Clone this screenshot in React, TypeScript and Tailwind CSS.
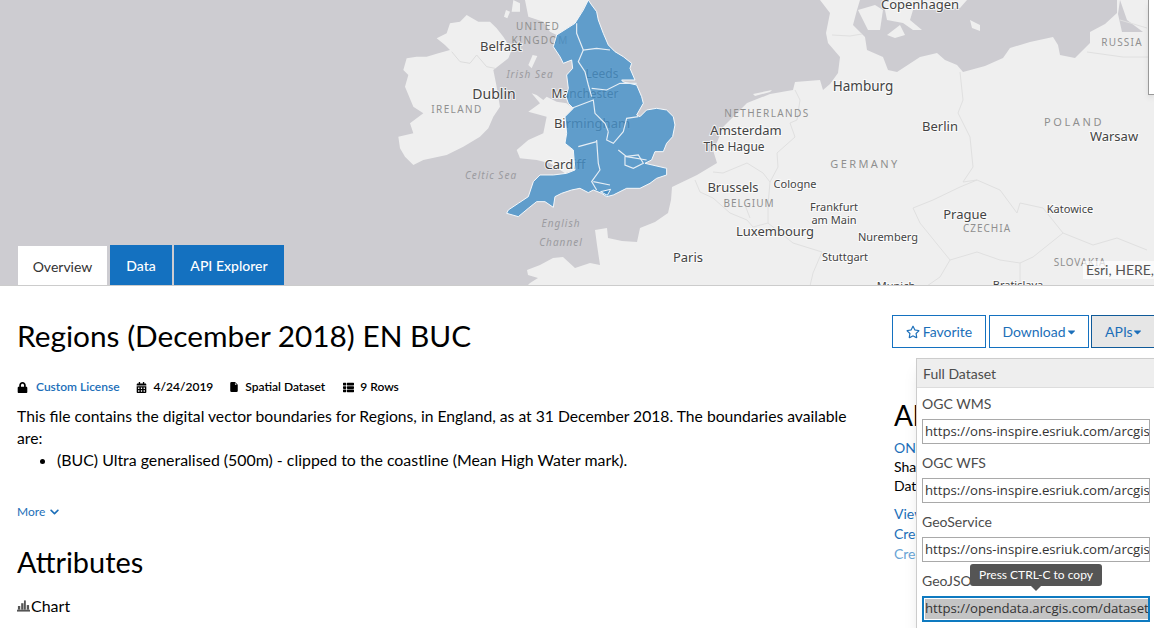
import React from 'react';
import { FaLock, FaCalendarAlt, FaThList, FaRegStar, FaChevronDown, FaCaretDown } from 'react-icons/fa';
import { BsFileEarmarkFill } from 'react-icons/bs';

const cities = [
  { t: 'Copenhagen', x: 920, y: 9, s: 13 },
  { t: 'Hamburg', x: 863, y: 91, s: 13.5 },
  { t: 'Berlin', x: 940, y: 131, s: 13 },
  { t: 'Warsaw', x: 1114, y: 141, s: 13 },
  { t: 'Amsterdam', x: 746, y: 135, s: 13 },
  { t: 'The Hague', x: 734, y: 151, s: 12 },
  { t: 'Brussels', x: 733, y: 192, s: 13 },
  { t: 'Cologne', x: 795, y: 188, s: 11 },
  { t: 'Frankfurt', x: 834, y: 211, s: 11 },
  { t: 'am Main', x: 834, y: 224, s: 11 },
  { t: 'Luxembourg', x: 775, y: 236, s: 13 },
  { t: 'Nuremberg', x: 888, y: 241, s: 11 },
  { t: 'Stuttgart', x: 845, y: 261, s: 11 },
  { t: 'Prague', x: 965, y: 219, s: 13 },
  { t: 'Katowice', x: 1070, y: 213, s: 11 },
  { t: 'Paris', x: 688, y: 262, s: 13 },
  { t: 'Bratislava', x: 1018, y: 289, s: 11 },
  { t: 'Munich', x: 896, y: 290, s: 11 },
  { t: 'Belfast', x: 501, y: 51, s: 13 },
  { t: 'Dublin', x: 494, y: 99, s: 14 },
  { t: 'Manchester', x: 585, y: 98, s: 12 },
  { t: 'Leeds', x: 602, y: 78, s: 12 },
  { t: 'Birmingham', x: 592, y: 128, s: 13 },
  { t: 'Cardiff', x: 565, y: 169, s: 13 },
];

const countries = [
  { t: 'POLAND', x: 1074, y: 126, s: 11, ls: 2.6 },
  { t: 'RUSSIA', x: 1122, y: 46, s: 10, ls: 1.2 },
  { t: 'NETHERLANDS', x: 767, y: 117, s: 10, ls: 1.4 },
  { t: 'GERMANY', x: 865, y: 168, s: 11, ls: 2.4 },
  { t: 'BELGIUM', x: 749, y: 207, s: 10, ls: 1 },
  { t: 'CZECHIA', x: 987, y: 232, s: 10, ls: 1 },
  { t: 'SLOVAKIA', x: 1080, y: 266, s: 10, ls: 0.8 },
  { t: 'IRELAND', x: 457, y: 113, s: 10, ls: 1.4 },
  { t: 'UNITED', x: 538, y: 30, s: 10, ls: 1.2 },
  { t: 'KINGDOM', x: 540, y: 44, s: 10, ls: 1.2 },
];

const seas = [
  { t: 'Irish Sea', x: 530, y: 78 },
  { t: 'Celtic Sea', x: 491, y: 179 },
  { t: 'English', x: 561, y: 227 },
  { t: 'Channel', x: 561, y: 246 },
];

const ENGLAND =
  'M625,0 L635,15 L650,35 L655,60 L670,100 L685,135 L705,155 L730,170 L755,190 L750,205 L765,240 L725,240 L730,246 L770,255 L785,290 L790,310 L770,345 L780,350 L800,330 L830,325 L860,330 L880,350 L885,375 L878,410 L860,430 L850,455 L825,455 L815,480 L795,490 L860,505 L860,525 L830,535 L810,550 L780,565 L740,565 L700,585 L680,590 L665,580 L640,570 L625,578 L600,565 L575,570 L545,580 L525,590 L520,622 L495,605 L470,605 L445,625 L415,650 L380,640 L385,630 L415,610 L445,590 L460,545 L480,525 L520,525 L560,520 L585,510 L580,450 L555,430 L560,400 L555,350 L580,325 L565,310 L558,290 L565,265 L560,225 L578,205 L575,180 L550,190 L540,170 L520,140 L530,105 L585,70 L610,30 Z';

const MapBackdrop = () => (
  <svg viewBox="0 0 1154 286" className="absolute inset-0 h-[286px] w-[1154px]">
    <rect width="1154" height="286" fill="#cdccd1" />
    {/* continent */}
    <path
      fill="#efefef"
      d="M527,286 L530,283 L538,278 L528,275 L527,270 L540,265 L553,258 L563,257 L575,268 L590,263 L600,265 L597,245 L595,230 L607,228 L608,238 L622,241 L637,242 L640,228 L655,222 L668,213 L671,200 L672,187 L697,175 L717,163 L713,150 L718,140 L723,127 L735,115 L747,103 L770,94 L793,90 L795,82 L820,80 L823,90 L830,84 L838,73 L840,57 L828,43 L826,33 L830,13 L820,0 L1154,0 L1154,286 Z"
    />
    <path
      fill="#cdccd1"
      d="M860,0 L857,10 L853,25 L865,37 L867,50 L883,57 L888,70 L897,72 L920,57 L937,53 L945,60 L957,65 L963,72 L985,66 L1003,58 L1010,48 L1030,42 L1053,37 L1058,45 L1060,55 L1075,58 L1083,50 L1090,43 L1090,32 L1105,24 L1117,13 L1117,0 Z"
    />
    <path fill="#efefef" d="M858,10 L875,5 L883,10 L880,30 L868,30 Z" />
    <path fill="#efefef" d="M887,35 L900,25 L905,35 L895,38 Z" />
    <path fill="#efefef" d="M883,0 L887,20 L903,23 L913,30 L922,30 L910,20 L913,10 L960,8 L967,0 Z" />
    <path fill="#efefef" d="M970,20 L980,25 L980,31 L972,28 Z" />
    <path fill="#efefef" d="M753,94 L772,90 L770,92 L755,96 Z" />
    <path fill="#efefef" d="M1091,33 L1118,24 L1123,30 L1095,38 Z" />
    <path fill="#cdccd1" d="M1120,0 L1127,20 L1143,32 L1122,32 L1118,14 Z" />
    {/* borders */}
    <g fill="none" stroke="#e0e0e0" strokeWidth="1">
      <path d="M832,35 L850,36 L862,34" />
      <path d="M795,90 L800,100 L797,120 L790,123 L795,137 L777,153 L778,167 L770,182" />
      <path d="M713,172 L723,173 L747,163 L763,173 L770,182" />
      <path d="M695,180 L700,192 L713,198 L730,213 L747,220 L753,227" />
      <path d="M770,182 L768,205 L768,223 L793,243 L822,252 L813,273 L810,286" />
      <path d="M753,227 L768,223 M745,205 L750,218" />
      <path d="M913,208 L920,223 L950,260 L940,277 L927,286" />
      <path d="M913,208 L933,200 L960,187 L977,180 L1000,190 L1017,213 L1020,203 L1043,208 L1063,233 L1093,245 L1117,238 L1147,250" />
      <path d="M950,260 L977,252 L1000,260 L1020,263 L1033,257 L1063,233" />
      <path d="M1020,263 L1020,286" />
      <path d="M960,72 L963,100 L958,113 L970,137 L973,167 L963,182 L977,180" />
      <path d="M1087,52 L1123,57 L1148,57" />
      <path d="M1120,20 L1147,28" />
    </g>
    {/* British Isles, drawn in zoomed coordinates */}
    <g transform="translate(380 0) scale(0.3333)">
      <path
        fill="#efefef"
        d="M80,175 L110,170 L140,170 L175,160 L210,150 L195,135 L170,115 L200,100 L210,70 L240,65 L260,45 L295,65 L330,65 L350,85 L370,110 L395,150 L385,175 L340,210 L345,235 L350,260 L360,320 L340,350 L325,385 L300,410 L250,440 L200,465 L130,480 L100,495 L75,470 L60,445 L55,410 L100,400 L90,370 L130,340 L100,320 L75,260 L85,225 L70,210 Z"
      />
      <path fill="#efefef" d="M435,0 L625,0 L605,35 L590,65 L530,105 L510,95 L490,65 L445,50 Z" />
      <path fill="#efefef" d="M400,0 L420,10 L420,35 L395,35 Z M378,30 L390,35 L382,55 L372,50 Z" />
      <path fill="#efefef" d="M458,165 L472,168 L455,205 L445,195 Z" />
      <path
        fill="#efefef"
        d="M455,280 L470,285 L490,300 L500,290 L530,305 L560,310 L580,325 L555,350 L560,400 L555,430 L580,450 L585,510 L555,520 L510,490 L470,480 L420,475 L410,450 L445,420 L490,400 L500,350 L445,335 L480,310 Z"
      />
      <path fill="#efefef" d={ENGLAND} />
      <path fill="none" stroke="#dcdcdc" strokeWidth="3" d="M215,155 L240,185 L270,190 L290,165 L320,200 L345,205" />
    </g>
    {countries.map((c) => (
      <text
        key={c.t}
        x={c.x}
        y={c.y}
        textAnchor="middle"
        fontFamily="'Noto Sans', sans-serif"
        fontSize={c.s}
        letterSpacing={c.ls}
        fill="#8f8f8f"
      >
        {c.t}
      </text>
    ))}
    {seas.map((c) => (
      <text
        key={c.t}
        x={c.x}
        y={c.y}
        textAnchor="middle"
        fontFamily="'Noto Sans', sans-serif"
        fontStyle="italic"
        fontSize="10"
        letterSpacing="1"
        fill="#9b9ba0"
      >
        {c.t}
      </text>
    ))}
    {cities.map((c) => (
      <text
        key={c.t}
        x={c.x}
        y={c.y}
        textAnchor="middle"
        fontFamily="'Noto Sans', sans-serif"
        fontSize={c.s}
        fill="#444444"
        stroke="#ffffff"
        strokeWidth="2"
        strokeOpacity="0.7"
        paintOrder="stroke"
      >
        {c.t}
      </text>
    ))}
    {/* England regions */}
    <g transform="translate(380 0) scale(0.3333)">
      <path fill="#468ec4" fillOpacity="0.85" stroke="#f4f7fa" strokeWidth="3" d={ENGLAND} />
      <path fill="#468ec4" stroke="#f4f7fa" strokeWidth="3" d="M662,575 L692,568 L682,586 Z" />
      <g fill="none" stroke="#e6eef5" strokeWidth="3.5">
        <path d="M590,70 L590,100 L610,150 L650,145 L690,150" />
        <path d="M610,150 L595,185 L615,215 L625,255 L635,290" />
        <path d="M635,265 L680,270 L720,250 L770,250" />
        <path d="M575,325 L640,300 L645,340 L675,370 L685,395" />
        <path d="M775,350 L740,355 L730,395 L700,430 L680,420 L685,395" />
        <path d="M595,440 L650,425" />
        <path d="M650,420 L655,490 L660,510 L635,545 L650,570" />
        <path d="M715,450 L740,470 L800,480" />
        <path d="M735,470 L775,465 L790,490 L760,505 L735,495 Z" />
        <path d="M640,545 L690,555" />
      </g>
    </g>
  </svg>
);

const ApiField = ({ label, value, focused }: { label: string; value: string; focused?: boolean }) => (
  <div className="mb-[9px]">
    <div className="h-[25px] text-[14px] leading-[20px] text-[#4c4c4c]">{label}</div>
    <div
      className={
        focused
          ? "flex h-[26px] items-center overflow-hidden border-2 border-[#0e7ac0] px-[1px] font-['Open_Sans'] text-[13.2px] text-[#333]"
          : "flex h-[25px] items-center overflow-hidden border border-[#a9a9a9] px-[2px] font-['Open_Sans'] text-[13.2px] text-[#333]"
      }
    >
      <span className={focused ? 'whitespace-nowrap bg-[#c4c4c4]' : 'whitespace-nowrap'}>{value}</span>
    </div>
  </div>
);

const ChartIcon = () => (
  <svg viewBox="0 0 14 12" className="h-[12px] w-[13px]" fill="#555">
    <rect x="0" y="10" width="14" height="2" />
    <rect x="1" y="6" width="2.5" height="4" />
    <rect x="4.5" y="3" width="2.5" height="7" />
    <rect x="7.5" y="0" width="2" height="10" />
    <rect x="10.5" y="5" width="2.5" height="5" />
  </svg>
);

const App: React.FC = () => {
  return (
    <div className="relative h-[628px] w-[1154px] overflow-hidden bg-white font-['Lato',sans-serif] text-black">
      {/* Map hero */}
      <div className="relative flex h-[286px] items-end gap-[2px] overflow-hidden border-b border-[#ccc] pl-[18px]">
        <MapBackdrop />
        <div className="relative mr-[1px] -mb-[1px] flex h-[40px] w-[89px] items-center justify-center bg-white text-[14px] text-[#333]">
          Overview
        </div>
        <div className="relative -mb-[1px] flex h-[41px] w-[62px] items-center justify-center bg-[#1471c0] text-[14px] font-medium text-white">
          Data
        </div>
        <div className="relative -mb-[1px] flex h-[41px] w-[110px] items-center justify-center bg-[#1471c0] text-[14px] font-medium text-white">
          API Explorer
        </div>
        <div className="absolute right-0 top-0 h-[95px] w-[6px] border-b border-l border-[#999] bg-white shadow-md" />
        <div className="absolute bottom-[6px] right-0 bg-white/70 pl-[3px] text-[14px] leading-[18px] text-[#555]">
          Esri, HERE,
        </div>
      </div>

      <div className="flex">
        {/* Left column */}
        <div className="w-[877px] shrink-0 pl-[17px]">
          <h1 className="mt-[30px] text-[29.8px] leading-[40px]">Regions (December 2018) EN BUC</h1>
          <div className="mt-[21px] flex h-[20px] items-center text-[12px] font-semibold">
            <FaLock className="h-[11px] w-[11px]" />
            <span className="ml-[8px] text-[#1c6fb9]">Custom License</span>
            <FaCalendarAlt className="ml-[16px] h-[11px] w-[11px]" />
            <span className="ml-[7px]">4/24/2019</span>
            <BsFileEarmarkFill className="ml-[16px] h-[12px] w-[10px]" />
            <span className="ml-[6px]">Spatial Dataset</span>
            <FaThList className="ml-[17px] h-[11px] w-[13px]" />
            <span className="ml-[5px]">9 Rows</span>
          </div>
          <p className="mt-[8px] pr-[20px] text-[15.7px] leading-[22px]">
            This file contains the digital vector boundaries for Regions, in England, as at 31 December 2018. The boundaries
            available are:
          </p>
          <ul className="list-disc pl-[40px] text-[15.9px] leading-[22px]">
            <li>(BUC) Ultra generalised (500m) - clipped to the coastline (Mean High Water mark).</li>
          </ul>
          <div className="mt-[31px] flex h-[20px] items-center gap-[3px] text-[12px] text-[#1c6fb9]">
            More <FaChevronDown className="h-[10px] w-[13px]" />
          </div>
          <h2 className="mt-[20px] text-[28.9px] leading-[40px]">Attributes</h2>
          <div className="mt-[14px] flex h-[20px] items-center gap-[1px] text-[16px]">
            <ChartIcon /> Chart
          </div>
        </div>

        {/* Right column */}
        <div className="relative min-w-0 grow">
          <div className="mt-[29px] flex gap-[3px] text-[14px] text-[#1c6fb9]">
            <div className="ml-[15px] flex h-[33px] w-[94px] shrink-0 items-center justify-center gap-[3px] border border-[#1471c0]">
              <FaRegStar className="h-[14px] w-[14px]" /> Favorite
            </div>
            <div className="flex h-[33px] w-[100px] shrink-0 items-center justify-center gap-[1px] border border-[#1471c0]">
              Download <FaCaretDown className="h-[12px] w-[9px]" />
            </div>
            <div className="-ml-[1px] flex h-[33px] w-[70px] shrink-0 items-center justify-start gap-0 border border-[#0f5a99] bg-[#e6e6e6] pl-[13px]">
              APIs <FaCaretDown className="h-[12px] w-[9px]" />
            </div>
          </div>
          <div className="ml-[17px] mt-[47px] whitespace-nowrap text-[14px]">
            <div className="text-[28px] leading-[40px]">About</div>
            <div className="mt-[3px] leading-[19px] text-[#1c6fb9]">ONS Geography</div>
            <div className="leading-[19px]">Shared By</div>
            <div className="leading-[19px]">Data Updated</div>
            <div className="mt-[9px] leading-[20px] text-[#1c6fb9]">View Full Details</div>
            <div className="leading-[20px] text-[#1c6fb9]">Create Web Map</div>
            <div className="leading-[20px] text-[#6aa5d6]">Create Story Map</div>
          </div>
        </div>
      </div>

      {/* APIs dropdown */}
      <div className="absolute left-[916px] top-[358px] w-[250px] border border-[#ccc] bg-white shadow-lg">
        <div className="flex h-[29px] items-center border-b border-[#ddd] bg-[#eee] pl-[6px] text-[14px] text-[#4c4c4c]">
          Full Dataset
        </div>
        <div className="w-[233px] pl-[5px] pt-[6px]">
          <ApiField label="OGC WMS" value="https://ons-inspire.esriuk.com/arcgis/rest/services" />
          <ApiField label="OGC WFS" value="https://ons-inspire.esriuk.com/arcgis/rest/services" />
          <ApiField label="GeoService" value="https://ons-inspire.esriuk.com/arcgis/rest/services" />
          <ApiField label="GeoJSON" value="https://opendata.arcgis.com/datasets/c8ab1f" focused />
        </div>
      </div>

      {/* Copy tooltip */}
      <div className="absolute left-[970px] top-[564px] flex h-[22px] w-[132px] items-center justify-center rounded-[3px] bg-[#555] text-[12px] text-white">
        Press CTRL-C to copy
        <div className="absolute left-[61px] top-[22px] h-0 w-0 border-x-[5px] border-t-[5px] border-x-transparent border-t-[#555]" />
      </div>
    </div>
  );
};

export default App;
